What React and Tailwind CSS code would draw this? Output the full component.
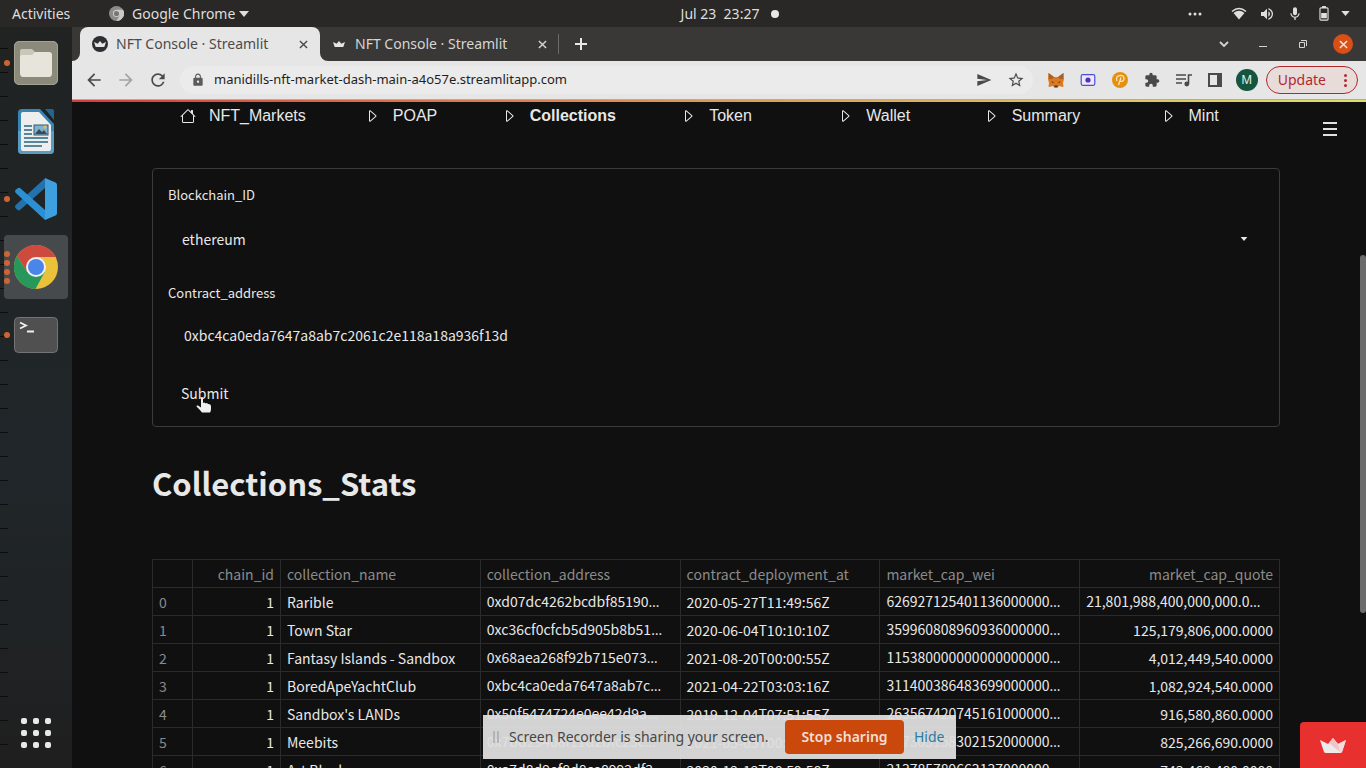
import { BsCaretRight, BsHouse, BsThreeDots } from "react-icons/bs";
import {
  MdArrowBack,
  MdArrowForward,
  MdExtension,
  MdLock,
  MdMic,
  MdRefresh,
  MdSend,
  MdStarBorder,
  MdVolumeUp,
} from "react-icons/md";

const navItems = [
  { label: "NFT_Markets", icon: BsHouse },
  { label: "POAP", icon: BsCaretRight },
  { label: "Collections", icon: BsCaretRight, active: true },
  { label: "Token", icon: BsCaretRight },
  { label: "Wallet", icon: BsCaretRight },
  { label: "Summary", icon: BsCaretRight },
  { label: "Mint", icon: BsCaretRight },
];

const columns = [
  { key: "chain_id", right: true },
  { key: "collection_name" },
  { key: "collection_address" },
  { key: "contract_deployment_at" },
  { key: "market_cap_wei" },
  { key: "market_cap_quote", right: true },
];

const rows = [
  ["1", "Rarible", "0xd07dc4262bcdbf85190…", "2020-05-27T11:49:56Z", "626927125401136000000…", "21,801,988,400,000,000.0…"],
  ["1", "Town Star", "0xc36cf0cfcb5d905b8b51…", "2020-06-04T10:10:10Z", "359960808960936000000…", "125,179,806,000.0000"],
  ["1", "Fantasy Islands - Sandbox", "0x68aea268f92b715e073…", "2021-08-20T00:00:55Z", "115380000000000000000…", "4,012,449,540.0000"],
  ["1", "BoredApeYachtClub", "0xbc4ca0eda7647a8ab7c…", "2021-04-22T03:03:16Z", "311400386483699000000…", "1,082,924,540.0000"],
  ["1", "Sandbox's LANDs", "0x50f5474724e0ee42d9a…", "2019-12-04T07:51:55Z", "263567420745161000000…", "916,580,860.0000"],
  ["1", "Meebits", "0x7bd29408f11d2bfc23c…", "2021-05-03T00:49:02Z", "237305158302152000000…", "825,266,690.0000"],
  ["1", "Art Blocks", "0xa7d8d9ef8d8ce8992df3…", "2020-12-12T08:59:58Z", "213785789663137000000…", "743,468,480.0000"],
];

const Crown = ({ className }) => (
  <svg viewBox="0 0 26 15" className={className} aria-hidden="true">
    <path d="M0 2 L8 6 L13 0 L18 6 L26 2 L22 14 Q21.500 15 20 15 H6 Q4.500 15 4 14 Z" fill="#ececec" />
    <path d="M13 0 L18 6 L21 15 L9 5 Z" fill="#f3c4c6" />
    <path d="M18 6 L26 2 L22 14 L20 15 Z" fill="#f4dcdc" />
  </svg>
);

const PlainCrown = ({ className }) => (
  <svg viewBox="0 0 26 15" className={className} aria-hidden="true">
    <path d="M0 2 L8 6 L13 0 L18 6 L26 2 L22 14 Q21.500 15 20 15 H6 Q4.500 15 4 14 Z" fill="currentColor" />
  </svg>
);

const CloseIcon = ({ className }) => (
  <svg viewBox="0 0 10 10" className={className} stroke="currentColor" strokeWidth="1.600" aria-hidden="true">
    <path d="M1 1 L9 9 M9 1 L1 9" />
  </svg>
);

const Caret = ({ className }) => (
  <svg viewBox="0 0 10 6" className={className} fill="currentColor" aria-hidden="true">
    <path d="M0 0 H10 L5 6 Z" />
  </svg>
);

const ChromeLogo = ({ className }) => (
  <svg viewBox="0 0 44 44" className={className} aria-hidden="true">
    <circle cx="22" cy="22" r="22" fill="#e9c13b" />
    <path d="M22 22 L22 12 H41.600 A22 22 0 0 0 2.900 11 L13.300 27 Z" fill="#cf4a3e" />
    <path d="M2.900 11 A22 22 0 0 0 21.500 44 L30.700 27 L22 22 L13.300 27 Z" fill="#27985a" />
    <circle cx="22" cy="22" r="10" fill="#f1f1f1" />
    <circle cx="22" cy="22" r="8" fill="#4a86ea" />
  </svg>
);

const TopBar = () => (
  <header className="relative flex h-[27px] shrink-0 items-center justify-between bg-[#292827] px-3 text-sm text-[#dfdfdd]">
    <div className="flex items-center">
      <span className="w-[97px]">Activities</span>
      <svg viewBox="0 0 16 16" className="mr-2 size-[15px]" aria-hidden="true">
        <circle cx="8" cy="8" r="8" fill="#8b8b8b" />
        <path d="M8 4 H15 A8 8 0 0 1 8 16 L11.500 10 Z" fill="#c9c9c9" />
        <circle cx="8" cy="8" r="3.800" fill="#d2d2d2" />
        <circle cx="8" cy="8" r="2.800" fill="#777777" />
      </svg>
      <span>Google Chrome</span>
      <Caret className="ml-1 h-[6px] w-[10px]" />
    </div>
    <div className="absolute inset-0 flex items-center justify-center gap-3 pl-[94px]">
      <span className="whitespace-pre">Jul 23  23:27</span>
      <span className="size-2 rounded-full bg-[#e8e8e8]" />
    </div>
    <div className="flex items-center gap-3 pr-1">
      <BsThreeDots className="mr-4 size-4" />
      <svg viewBox="0 0 16 13" className="h-[13px] w-4" fill="currentColor" aria-hidden="true">
        <path d="M0.500 4 Q8 -2.500 15.500 4 L14.500 5 Q8 -0.500 1.500 5 Z" />
        <path d="M2.500 6 Q8 1.500 13.500 6 L8 12.500 Z" />
      </svg>
      <MdVolumeUp className="size-4" />
      <MdMic className="mr-1 size-4" />
      <svg viewBox="0 0 10 16" className="h-[15px] w-[10px]" aria-hidden="true">
        <path d="M3 0 H7 V2 H3 Z M2 7.500 H8 V13 H2 Z" fill="currentColor" />
        <rect x="0.700" y="2" width="8.600" height="13" rx="1" fill="none" stroke="currentColor" strokeWidth="1.200" />
      </svg>
      <Caret className="h-[5px] w-[9px]" />
    </div>
  </header>
);

const RunDots = ({ count = 1 }) => (
  <span className="absolute inset-y-0 left-1 flex flex-col justify-center gap-[3px]">
    {Array.from({ length: count }, (_, i) => (
      <span key={i} className="size-[6px] rounded-full bg-[#cf6433]" />
    ))}
  </span>
);

const Ticks = () => (
  <div className="absolute inset-y-0 left-0 w-2 overflow-hidden" aria-hidden="true">
    {Array.from({ length: 32 }, (_, i) => (
      <div key={i} className="mb-[23px] h-px bg-[#0d0d0d] first:mt-[-3px]" />
    ))}
  </div>
);

const Dock = () => (
  <aside className="relative flex w-[72px] shrink-0 flex-col items-center gap-1 bg-linear-to-b from-[#202322] via-[#20262a] via-60% to-[#1f1f1f] pt-1 pb-2">
    <Ticks />
    <button aria-label="Files" className="relative flex h-16 w-full items-center justify-center">
      <RunDots />
      <svg viewBox="0 0 44 44" className="size-11" aria-hidden="true">
        <rect width="44" height="44" rx="5" fill="#8a897a" />
        <rect x="0.500" y="0.500" width="43" height="43" rx="5" fill="none" stroke="#a5a493" />
        <path d="M6 10 Q6 8 8 8 H18 L21 11 H33 V20 H6 Z" fill="#c9c6ba" />
        <path d="M6 16 Q6 14 8 14 H18 L21 11 H35 Q38 11 38 14 V32 Q38 36 35 36 H9 Q6 36 6 32 Z" fill="#e7e4dc" />
      </svg>
    </button>
    <button aria-label="Writer" className="flex h-16 w-full items-center justify-center">
      <svg viewBox="0 0 36 45" className="h-[45px] w-9" aria-hidden="true">
        <path d="M4 0 H22 L36 15 V41 Q36 45 32 45 H4 Q0 45 0 41 V4 Q0 0 4 0 Z" fill="#3785b3" />
        <path d="M0 22 H36 V41 Q36 45 32 45 H4 Q0 45 0 41 Z" fill="#5b9dc2" />
        <path d="M27 0 H34 Q36 0 36 2 V11 Z" fill="#23658b" />
        <path d="M5 3 H21 L33 16 V40 Q33 42 31 42 H5 Q3 42 3 40 V5 Q3 3 5 3 Z" fill="#eeeeee" />
        <path d="M6 17 H14 M6 21 H14 M6 25 H14 M6 29 H30 M6 33 H30 M6 37 H24" stroke="#27647f" strokeWidth="1.600" />
        <rect x="16" y="16" width="14" height="10" fill="#7eb4d2" stroke="#315a70" />
        <path d="M17 25 L21 20 L24 23 L26 21 L29 25 Z" fill="#3f4a50" />
        <circle cx="27" cy="18" r="1.500" fill="#e8c14d" />
      </svg>
    </button>
    <button aria-label="Code" className="relative flex h-16 w-full items-center justify-center">
      <RunDots />
      <svg viewBox="0 0 42 42" className="size-[42px]" aria-hidden="true">
        <path d="M30 10 L5 32 Q3.500 33 2 31.500 L0.500 30 Q-0.500 28.500 0.800 27 L30 0.300 Z" fill="#2372ae" />
        <path d="M30 32 L5 10 Q3.500 9.500 2 10.800 L0.500 12 Q-0.500 13.500 0.800 15 L30 42 Z" fill="#2b8fd3" />
        <path d="M30 0 L40.500 4.500 Q42 5 42 7 V35 Q42 37 40.500 37.500 L30 42 Z" fill="#3fa0e0" />
      </svg>
    </button>
    <button aria-label="Google Chrome" className="relative flex h-16 w-full items-center justify-center">
      <span className="absolute inset-y-0 right-1 left-1 rounded-sm bg-[#474a4c]" />
      <RunDots count={4} />
      <ChromeLogo className="relative size-11" />
    </button>
    <button aria-label="Terminal" className="relative flex h-16 w-full items-center justify-center">
      <RunDots />
      <svg viewBox="0 0 44 36" className="h-9 w-11" aria-hidden="true">
        <rect x="0.500" y="0.500" width="43" height="35" rx="4" fill="#505050" stroke="#747474" />
        <path d="M6 5.500 L12 8.500 L6 11.500 M13 14.500 H20" fill="none" stroke="#f0f0f0" strokeWidth="1.800" />
      </svg>
    </button>
    <button aria-label="Show Applications" className="mt-auto grid grid-cols-3 gap-[6px] p-3">
      {Array.from({ length: 9 }, (_, i) => (
        <span key={i} className="size-[6px] rounded-xs bg-[#e8e8e8]" />
      ))}
    </button>
  </aside>
);

const TabStrip = () => (
  <div className="flex h-[34px] shrink-0 items-center bg-[#393836] pr-[13px] text-[#d5d5d3]">
    <div className="flex h-full items-end bg-[#e6e6e6]">
      <span className="h-full w-2 rounded-br-lg bg-[#393836]" />
    </div>
    <div className="flex h-full w-60 items-center rounded-t-lg bg-[#e6e6e6] px-3 text-[#4b4b4b]">
      <span className="mr-2 flex size-4 items-center justify-center rounded-full bg-[#2d2f33] text-[#e6e6e6]">
        <PlainCrown className="w-3" />
      </span>
      <span className="flex-1 whitespace-nowrap text-sm">NFT Console · Streamlit</span>
      <button aria-label="Close tab"><CloseIcon className="size-[9px]" /></button>
    </div>
    <div className="h-full bg-[#e6e6e6]">
      <div className="flex h-full w-[238px] items-center rounded-bl-lg bg-[#393836] pr-[11px] pl-[13px]">
        <PlainCrown className="mr-[10px] w-3 text-[#e6e6e6]" />
        <span className="flex-1 whitespace-nowrap text-sm">NFT Console · Streamlit</span>
        <button aria-label="Close tab"><CloseIcon className="size-[9px]" /></button>
      </div>
    </div>
    <span className="h-5 w-px bg-[#6d6c6a]" />
    <button aria-label="New tab" className="ml-4">
      <svg viewBox="0 0 12 12" className="size-3" stroke="#e8e8e8" strokeWidth="2" aria-hidden="true">
        <path d="M6 0 V12 M0 6 H12" />
      </svg>
    </button>
    <div className="ml-auto flex items-center">
      <svg viewBox="0 0 10 7" className="mr-[30px] w-[10px]" fill="none" stroke="currentColor" strokeWidth="1.800" aria-hidden="true">
        <path d="M1 1 L5 5 L9 1" />
      </svg>
      <button aria-label="Minimize" className="mt-1 mr-8 h-px w-2 bg-[#d5d5d3]" />
      <button aria-label="Restore" className="mr-[26px]">
        <svg viewBox="0 0 8 8" className="size-2" fill="none" stroke="currentColor" aria-hidden="true">
          <path d="M0.500 2.500 H5.500 V7.500 H0.500 Z M2 0.500 H7.500 V6" />
        </svg>
      </button>
      <button aria-label="Close" className="flex size-5 items-center justify-center rounded-full bg-[#d94f15] text-[#f4e5dc]">
        <CloseIcon className="size-[9px]" />
      </button>
    </div>
  </div>
);

const Toolbar = () => (
  <div className="flex h-[38px] shrink-0 items-center bg-[#e6e6e6] pr-2 pl-3 text-[#4a4a4a]">
    <button aria-label="Back" className="mr-3"><MdArrowBack className="size-5" /></button>
    <button aria-label="Forward" className="mr-3 text-[#a3a3a3]"><MdArrowForward className="size-5" /></button>
    <button aria-label="Reload"><MdRefresh className="size-5" /></button>
    <div className="ml-3 flex h-7 flex-1 items-center rounded-full bg-[#ebebeb] pr-2 pl-[11px]">
      <MdLock className="mr-[9px] size-[14px] text-[#5b5b5b]" />
      <input
        aria-label="Address"
        className="min-w-0 flex-1 text-[13px] text-[#1e1e1e] outline-none"
        defaultValue="manidills-nft-market-dash-main-a4o57e.streamlitapp.com"
      />
      <MdSend className="mr-[15px] size-4" />
      <MdStarBorder className="size-[18px]" />
    </div>
    <div className="ml-[15px] flex items-center gap-4">
      <svg viewBox="0 0 16 15" className="w-4" aria-hidden="true">
        <path d="M0.500 0 L6 4 H10 L15.500 0 L16 6 L15 10 L15.500 14 L11 13 L9.500 15 H6.500 L5 13 L0.500 14 L1 10 L0 6 Z" fill="#de7a1d" />
        <path d="M0.500 0 L6 4 L4 6 L1 6 Z M15.500 0 L10 4 L12 6 L15 6 Z" fill="#a9602b" />
        <path d="M3.500 8 L6 9.500 L4.500 10 Z M12.500 8 L10 9.500 L11.500 10 Z M6.500 12.500 H9.500 L9.500 14 H6.500 Z" fill="#3a3230" />
      </svg>
      <svg viewBox="0 0 16 12" className="w-4" aria-hidden="true">
        <rect x="1.200" y="0.700" width="13.600" height="10.600" rx="1.500" fill="#eceaf8" stroke="#4b4fd6" strokeWidth="1.200" />
        <circle cx="8" cy="6" r="2.600" fill="#5a2bc0" />
      </svg>
      <svg viewBox="0 0 16 16" className="w-4" aria-hidden="true">
        <circle cx="8" cy="8" r="8" fill="#e6900f" />
        <path d="M5 9 Q3 4 8.500 3.300 Q12.500 3.500 12 7 Q11 10.500 7.500 9 M9 5.500 L6.500 13" fill="none" stroke="#fbe6c4" strokeWidth="1.300" />
      </svg>
      <MdExtension className="size-4" />
      <svg viewBox="0 0 16 14" className="w-4" aria-hidden="true">
        <path d="M0 2 H10 M0 6 H10 M0 10 H6 M12.500 11 V2 H16" fill="none" stroke="currentColor" strokeWidth="1.600" />
        <circle cx="10.800" cy="11" r="2.400" fill="currentColor" />
      </svg>
      <svg viewBox="0 0 14 14" className="w-[14px]" aria-hidden="true">
        <path d="M0 0 H14 V14 H0 Z M2 2 V12 H9 V2 Z" fill="currentColor" fillRule="evenodd" />
      </svg>
    </div>
    <span className="ml-[14px] flex size-[22px] items-center justify-center rounded-full bg-[#15553f] text-xs text-[#e8efe9]">M</span>
    <button className="ml-2 flex h-7 items-center rounded-full border border-[#b3282d] bg-[#e8dcdb] pr-2 pl-[11px] text-sm text-[#b3282d]">
      Update
      <span className="ml-4 flex flex-col gap-[2px] px-[2px]">
        <span className="size-[3px] rounded-full bg-[#b3282d]" />
        <span className="size-[3px] rounded-full bg-[#b3282d]" />
        <span className="size-[3px] rounded-full bg-[#b3282d]" />
      </span>
    </button>
  </div>
);

const PageNav = () => (
  <nav className="grid grid-cols-7 px-3 pt-[2px] font-['Liberation_Sans',sans-serif] text-base">
    {navItems.map(({ label, icon: Icon, active }) => (
      <a
        key={label}
        href={`#${label}`}
        className={`flex items-center justify-center gap-[13px] ${active ? "font-bold" : ""}`}
      >
        <Icon className="size-4 shrink-0" />
        {label}
      </a>
    ))}
  </nav>
);

const QueryForm = () => (
  <form
    className="mt-10 flex flex-col rounded-sm border border-[#3b3b3b] px-[15px] pt-4 pb-[15px]"
    onSubmit={(e) => e.preventDefault()}
  >
    <label htmlFor="chain" className="text-[13px] leading-5">Blockchain_ID</label>
    <div className="relative mt-[14px] flex">
      <select id="chain" className="h-10 flex-1 appearance-none px-[14px] outline-none" defaultValue="ethereum">
        <option>ethereum</option>
        <option>polygon</option>
      </select>
      <Caret className="pointer-events-none absolute top-[18px] right-4 h-1 w-2" />
    </div>
    <label htmlFor="contract" className="mt-6 text-[13px] leading-5">Contract_address</label>
    <input
      id="contract"
      className="mt-3 h-10 px-4 outline-none"
      defaultValue="0xbc4ca0eda7647a8ab7c2061c2e118a18a936f13d"
    />
    <div className="relative mt-5">
      <button className="h-9 px-[13px]">Submit</button>
      {/* hand cursor over the button */}
      <svg viewBox="0 0 16 17" className="absolute top-[22px] left-7 w-4" aria-hidden="true">
        <path
          d="M5 1 Q5 0 6 0 Q7 0 7 1 V6 Q8.500 5 9.500 6.500 Q11 5.500 12 7 Q14.500 6.500 15 9 V12 Q15 14 14 15.500 H6 Q5 14 3 12 L0.500 9.500 Q0.500 8 2 8.500 L5 10.500 Z"
          fill="#f0f0f0"
        />
      </svg>
    </div>
  </form>
);

// the CJK font centres the dots after digits, so they get a Latin font
const Cell = ({ text }) =>
  text.endsWith("…") ? (
    <>
      {text.slice(0, -1)}
      <span className="font-['Open_Sans',sans-serif]">…</span>
    </>
  ) : (
    text
  );

const StatsTable = () => (
  <table className="mt-[51px] w-full table-fixed border-collapse text-left leading-5">
    <colgroup>
      <col className="w-10" />
      <col className="w-[88px]" />
      <col />
      <col />
      <col />
      <col />
      <col />
    </colgroup>
    <thead>
      <tr className="h-7 text-[#8b8b8b]">
        <th className="border border-[#2b2b2b]" aria-label="index" />
        {columns.map((col) => (
          <th
            key={col.key}
            className={`border border-[#2b2b2b] px-[6px] font-normal whitespace-nowrap ${col.right ? "text-right" : ""}`}
          >
            {col.key}
          </th>
        ))}
      </tr>
    </thead>
    <tbody>
      {rows.map((row, i) => (
        <tr key={i} className="h-7">
          <th className="border border-[#2b2b2b] px-[6px] font-normal text-[#8b8b8b]">{i}</th>
          {row.map((cell, j) => (
            <td
              key={j}
              className={`overflow-hidden border border-[#2b2b2b] px-[6px] whitespace-nowrap ${columns[j].right && !cell.endsWith("…") ? "text-right" : ""}`}
            >
              <Cell text={cell} />
            </td>
          ))}
        </tr>
      ))}
    </tbody>
  </table>
);

const ShareBar = () => (
  <div className="absolute bottom-[9px] left-[483px] flex h-11 items-center bg-[#dedede]/95 px-[10px] text-sm text-[#474747]">
    <span className="mr-[10px] h-3 w-[6px] border-x-2 border-[#b4b4b4]" />
    <span className="w-[266px] whitespace-nowrap">Screen Recorder is sharing your screen.</span>
    <button className="ml-[10px] h-[34px] w-[119px] rounded-sm bg-[#cb480c] font-semibold whitespace-nowrap text-[#f0dfd5]">Stop sharing</button>
    <button className="ml-[10px] w-8 text-left text-[#2a7ba3]">Hide</button>
  </div>
);

export default function App() {
  return (
    <div lang="en" className="relative flex h-screen flex-col overflow-hidden bg-[#101010] font-['Noto_Sans',sans-serif]">
      <TopBar />
      <div className="flex min-h-0 flex-1">
        <Dock />
        <div className="flex min-w-0 flex-1 flex-col">
          <TabStrip />
          <Toolbar />
          <div className="h-[3px] shrink-0 border-t border-[#b5aaa6] bg-linear-to-r from-[#d63a3c] via-[#dd9a57] to-[#dcdf6c]" />
          <main className="relative min-h-0 flex-1 overflow-hidden pr-[86px] pl-20 font-['Noto_Sans_CJK_SC',sans-serif] text-sm text-[#e8e8e8]">
            <PageNav />
            <QueryForm />
            <h1 className="mt-[31px] text-[31px] leading-[50px] font-semibold">Collections_Stats</h1>
            <StatsTable />
            <button aria-label="Menu" className="absolute top-5 right-[29px] flex flex-col gap-1">
              <span className="h-[2px] w-[14px] bg-[#e0e0e0]" />
              <span className="h-[2px] w-[14px] bg-[#e0e0e0]" />
              <span className="h-[2px] w-[14px] bg-[#e0e0e0]" />
            </button>
            <div className="absolute top-[153px] right-0 h-[358px] w-[6px] rounded-full bg-[#6b6b6b]" />
            <a href="#streamlit" aria-label="Streamlit" className="absolute right-0 bottom-0 flex h-[46px] w-[66px] items-center justify-center rounded-tl-sm bg-[#e8302e]">
              <Crown className="w-[26px]" />
            </a>
          </main>
        </div>
      </div>
      <ShareBar />
    </div>
  );
}
